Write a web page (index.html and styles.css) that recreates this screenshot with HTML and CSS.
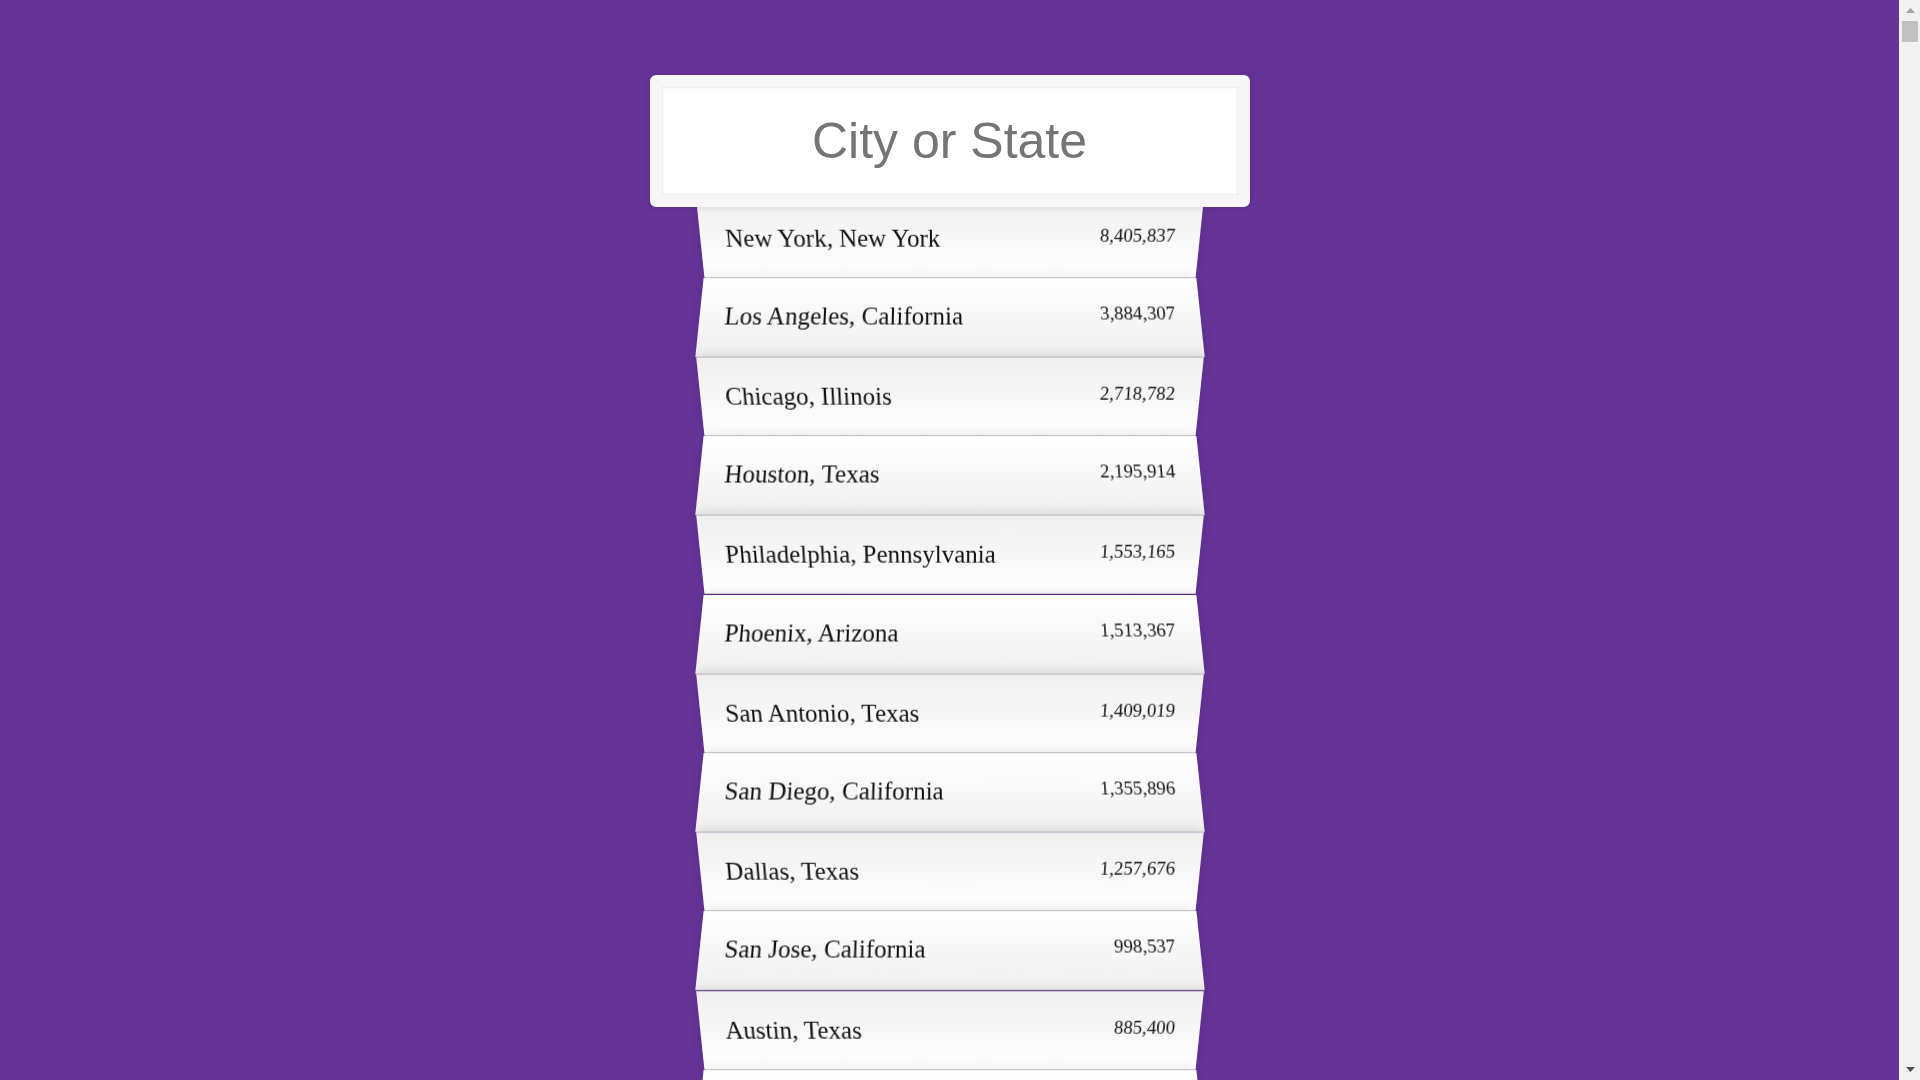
FILE: index.html
```html
<!DOCTYPE html>
<html lang="en">
<head>
<meta charset="UTF-8">
<title>Type Ahead</title>
<link rel="stylesheet" href="styles.css">
</head>
<body>
<form class="search-form">
  <input type="text" class="search" placeholder="City or State">
  <ul class="suggestions">
    <li><span class="name">New York, New York</span><span class="population">8,405,837</span></li>
    <li><span class="name">Los Angeles, California</span><span class="population">3,884,307</span></li>
    <li><span class="name">Chicago, Illinois</span><span class="population">2,718,782</span></li>
    <li><span class="name">Houston, Texas</span><span class="population">2,195,914</span></li>
    <li><span class="name">Philadelphia, Pennsylvania</span><span class="population">1,553,165</span></li>
    <li><span class="name">Phoenix, Arizona</span><span class="population">1,513,367</span></li>
    <li><span class="name">San Antonio, Texas</span><span class="population">1,409,019</span></li>
    <li><span class="name">San Diego, California</span><span class="population">1,355,896</span></li>
    <li><span class="name">Dallas, Texas</span><span class="population">1,257,676</span></li>
    <li><span class="name">San Jose, California</span><span class="population">998,537</span></li>
    <li><span class="name">Austin, Texas</span><span class="population">885,400</span></li>
    <li><span class="name">Indianapolis, Indiana</span><span class="population">843,393</span></li>
    <li><span class="name">Jacksonville, Florida</span><span class="population">842,583</span></li>
    <li><span class="name">San Francisco, California</span><span class="population">837,442</span></li>
  </ul>
</form>
<div class="scrollbar" aria-hidden="true">
  <div class="scroll-btn">
    <svg width="9" height="5" viewBox="0 0 9 5"><polygon points="4.5,0 9,5 0,5" fill="#a3a3a3"/></svg>
  </div>
  <div class="scroll-track">
    <div class="scroll-thumb"></div>
  </div>
  <div class="scroll-btn">
    <svg width="9" height="5" viewBox="0 0 9 5"><polygon points="0,0 9,0 4.5,5" fill="#505050"/></svg>
  </div>
</div>
</body>
</html>
```
FILE: styles.css
```css
html {
  box-sizing: border-box;
  background: #663399;
  font-family: "Liberation Serif", "Times New Roman", serif;
  font-size: 25px;
  font-weight: 200;
}
*, *::before, *::after {
  box-sizing: inherit;
}
body {
  margin: 0;
  padding-right: 21px;
}
.search-form {
  max-width: 500px;
  margin: 62.5px auto;
}
input.search {
  width: 120%;
  padding: 25px;
  margin: 0;
  text-align: center;
  outline: 0;
  border: 12.5px solid #f7f7f7;
  position: relative;
  left: -10%;
  top: 12.5px;
  z-index: 2;
  border-radius: 6.25px;
  font-family: "Liberation Sans", Arial, sans-serif;
  font-size: 50px;
  color: #333;
  background: #fff;
  box-shadow: 0 0 6.25px rgba(0, 0, 0, 0.12), inset 0 0 2.5px rgba(0, 0, 0, 0.19);
}
input.search::placeholder {
  color: #757575;
}
.suggestions {
  margin: 1px 0 0;
  padding: 0;
  position: relative;
}
.suggestions li {
  background: #fff;
  list-style: none;
  border-bottom: 1.25px solid #d8d8d8;
  box-shadow: 0 0 12.5px rgba(0, 0, 0, 0.14);
  margin: 0;
  padding: 25px;
  display: flex;
  justify-content: space-between;
  text-transform: capitalize;
  color: #111;
}
.suggestions li .name {
  line-height: 28.2px;
}
.suggestions li:nth-child(even) {
  transform: perspective(125px) rotateX(3deg) translateY(2.5px) scale(1.001);
  background: linear-gradient(to bottom, #ffffff 0%, #efefef 100%);
}
.suggestions li:nth-child(odd) {
  transform: perspective(125px) rotateX(-3deg) translateY(3.75px);
  background: linear-gradient(to top, #ffffff 0%, #efefef 100%);
}
.population {
  font-size: 18.75px;
  line-height: normal;
}
.scrollbar {
  position: fixed;
  top: 0;
  right: 0;
  bottom: 0;
  width: 21px;
  background: #f1f1f1;
  display: flex;
  flex-direction: column;
  z-index: 10;
}
.scroll-btn {
  height: 21px;
  flex: none;
  display: flex;
  align-items: center;
  justify-content: center;
  padding-left: 1px;
}
.scroll-btn svg {
  display: block;
}
.scroll-track {
  flex: 1;
  padding: 0 2px 0 3px;
}
.scroll-thumb {
  height: 21px;
  background: #c1c1c1;
}
```
